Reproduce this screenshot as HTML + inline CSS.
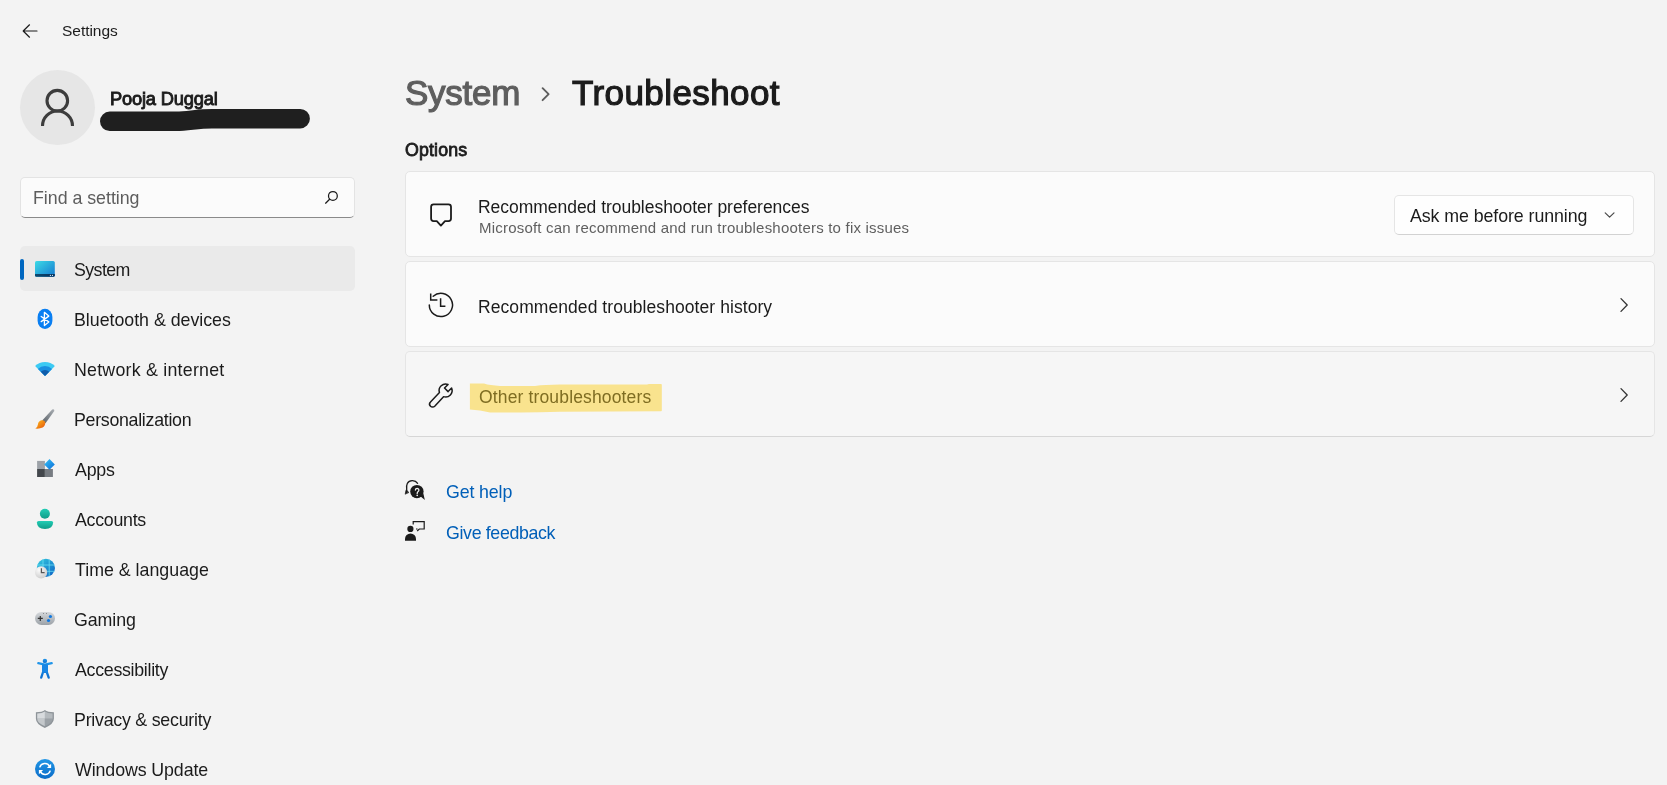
<!DOCTYPE html>
<html><head><meta charset="utf-8"><title>Settings</title>
<style>
html,body{margin:0;padding:0;}
body{width:1667px;height:785px;overflow:hidden;position:relative;background:#f3f3f3;font-family:"Liberation Sans", sans-serif;}
.t{position:absolute;white-space:nowrap;transform-origin:0 0;will-change:transform;}
.ov{position:absolute;left:0;top:0;pointer-events:none;}
.box{position:absolute;box-sizing:border-box;}
</style></head><body>
<!-- avatar -->
<div class="box" style="left:20px;top:70px;width:75px;height:75px;border-radius:50%;background:#e6e6e6"></div>
<!-- search box -->
<div class="box" style="left:20px;top:177px;width:335px;height:41px;border-radius:5px;background:#fbfbfb;border:1px solid #e3e3e3;border-bottom:1px solid #8a8a8a"></div>
<!-- nav selection -->
<div class="box" style="left:20px;top:246px;width:335px;height:45px;border-radius:5px;background:#eaeaea"></div>
<div class="box" style="left:20px;top:258.5px;width:4px;height:21px;border-radius:2px;background:#0067c0"></div>
<!-- cards -->
<div class="box" style="left:405px;top:171px;width:1250px;height:86px;border-radius:5px;background:#fbfbfb;border:1px solid #e5e5e5"></div>
<div class="box" style="left:405px;top:261px;width:1250px;height:86px;border-radius:5px;background:#fbfbfb;border:1px solid #e5e5e5"></div>
<div class="box" style="left:405px;top:351px;width:1250px;height:86px;border-radius:5px;background:#f6f6f6;border:1px solid #e5e5e5;border-bottom-color:#d6d6d6"></div>
<!-- dropdown -->
<div class="box" style="left:1394px;top:195px;width:240px;height:40px;border-radius:5px;background:#fefefe;border:1px solid #e5e5e5;border-bottom-color:#d2d2d2"></div>
<!-- highlight -->


<svg class="ov" width="1667" height="785" viewBox="0 0 1667 785">
 <g fill="none" stroke="#1b1b1b" stroke-linecap="round" stroke-linejoin="round">
  <!-- back arrow -->
  <path d="M37 31 H23.5 M29.5 24.8 L23.2 31 L29.5 37.2" stroke-width="1.2"/>
  <!-- search -->
  <circle cx="332.9" cy="195.9" r="4.4" stroke-width="1.25"/>
  <path d="M329.6 199.2 L325.6 203.2" stroke-width="1.25"/>
  <!-- breadcrumb chevron -->
  <path d="M542.6 88.2 L548.6 94.2 L542.6 100.2" stroke="#5e5e5e" stroke-width="1.9"/>
  <!-- dropdown chevron -->
  <path d="M1605.2 212.8 L1609.6 217.2 L1614 212.8" stroke="#4a4a4a" stroke-width="1.2"/>
  <!-- row chevrons -->
  <path d="M1621 298.6 L1627.2 305 L1621 311.4" stroke="#333" stroke-width="1.3"/>
  <path d="M1621 388.6 L1627.2 395 L1621 401.4" stroke="#333" stroke-width="1.3"/>
  <!-- speech bubble -->
  <path d="M433.6 204.3 H448.5 Q451 204.3 451 206.8 V218.6 Q451 221.1 448.5 221.1 H445 L440.9 225.6 L436.8 221.1 H433.6 Q431.1 221.1 431.1 218.6 V206.8 Q431.1 204.3 433.6 204.3 Z" stroke-width="1.8"/>
  <!-- history -->
  <path d="M429.3 305 A11.6 11.6 0 1 0 433.2 296.3" stroke-width="1.5"/>
  <path d="M430.7 293.4 V300 H437.4" stroke-width="1.5" stroke-linecap="butt" stroke-linejoin="miter"/>
  <path d="M440.6 298.2 V306.2 H445.4" stroke-width="1.5" stroke-linecap="butt" stroke-linejoin="miter"/>
  <!-- wrench -->
  <path d="M430.5 402.0 L439.45 392.55 A6.5 6.5 0 0 1 448.07 384.49 L444.5 388.0 L448.1 391.6 L451.6 388.0 A6.5 6.5 0 0 1 443.55 396.65 L434.7 406.2 A2.9 2.9 0 0 1 430.5 402.0 Z" stroke-width="1.5"/>
  <!-- get help arc -->
  <path d="M417.6 483.3 C415.5 480, 409.5 479.2, 407.3 483.5 C405.8 486.5, 407.3 489.5, 406.5 491.5" stroke-width="1.3"/>
  <path d="M405.3 493.8 L406.2 489.8 L408.6 492.2 Z" fill="#1b1b1b" stroke-width="0.8"/>
  <!-- feedback bubble -->
  <path d="M413.2 524.6 V521.6 H424.2 V529 H419.3 L417.2 531 M416 529 H417.5" stroke-width="1.2" stroke-linecap="butt" stroke-linejoin="miter"/>
 </g>
 <g fill="#1b1b1b">
  <!-- get help bubble -->
  <circle cx="416.9" cy="491.6" r="6.7"/>
  <path d="M420 496 L424.9 499.9 L423.3 493.5 Z"/>
  <!-- feedback person -->
  <circle cx="410.4" cy="528.9" r="3.1"/>
  <path d="M405 540.8 V539 A5.5 5.5 0 0 1 416 539 V540.8 Z"/>
 </g>

 <defs>
  <linearGradient id="gSys" x1="0" y1="0" x2="1" y2="1"><stop offset="0" stop-color="#3ddbe6"/><stop offset="1" stop-color="#1478d0"/></linearGradient>
  <linearGradient id="gSysBar" x1="0" y1="0" x2="1" y2="0"><stop offset="0" stop-color="#0d4a70"/><stop offset="1" stop-color="#06305a"/></linearGradient>
  <linearGradient id="gBrushH" x1="1" y1="0" x2="0" y2="1"><stop offset="0" stop-color="#a9aeb3"/><stop offset="1" stop-color="#5a6168"/></linearGradient>
  <linearGradient id="gBrushB" x1="0" y1="0" x2="1" y2="1"><stop offset="0" stop-color="#ffc21a"/><stop offset="1" stop-color="#e4500e"/></linearGradient>
  <linearGradient id="gDiamond" x1="0" y1="0" x2="1" y2="1"><stop offset="0" stop-color="#35c3f7"/><stop offset="1" stop-color="#0a6ad6"/></linearGradient>
  <linearGradient id="gTeal" x1="0" y1="0" x2="0" y2="1"><stop offset="0" stop-color="#22cdb5"/><stop offset="1" stop-color="#0e9c88"/></linearGradient>
  <linearGradient id="gGlobe" x1="0" y1="0" x2="1" y2="1"><stop offset="0" stop-color="#35cde0"/><stop offset="1" stop-color="#0c5fc4"/></linearGradient>
  <radialGradient id="gClock" cx="0.35" cy="0.3" r="0.8"><stop offset="0" stop-color="#fbfbfb"/><stop offset="1" stop-color="#c9c9c9"/></radialGradient>
  <linearGradient id="gPad" x1="0" y1="0" x2="0" y2="1"><stop offset="0" stop-color="#d6d9dc"/><stop offset="1" stop-color="#9ca2a8"/></linearGradient>
  <linearGradient id="gAcc" x1="0" y1="0" x2="0" y2="1"><stop offset="0" stop-color="#2196ea"/><stop offset="1" stop-color="#0d6fd0"/></linearGradient>
  <linearGradient id="gUpd" x1="0" y1="0" x2="0" y2="1"><stop offset="0" stop-color="#2196e6"/><stop offset="1" stop-color="#0b6cc8"/></linearGradient>
 </defs>
 <!-- highlight -->
 <path d="M469.9 383.4 L484 383.6 Q490 385.6 500 386 L535 386 Q545 384.8 560 384.6 L647 384.6 L649 384 L661 384 Q661.8 384 661.8 384.8 L661.8 410.5 Q661.8 411.3 661 411.3 L560 411.8 Q540 412.5 520 412.5 L490 412.5 Q480 410 469.9 409.5 Z" fill="#f9e38e"/>
 <!-- avatar person -->
 <g fill="none" stroke="#3d3d3d" stroke-width="3.1">
  <circle cx="57.3" cy="100.7" r="10.3"/>
  <path d="M42.5 126 A15 15 0 0 1 72.5 126"/>
 </g>
 <!-- redaction -->
 <path d="M109.7 121.3 L176 121.3 C189 121.3, 196 118.7, 212 118.7 L300.2 118.7" fill="none" stroke="#1f1f1f" stroke-width="19.4" stroke-linecap="round"/>
 <!-- system icon -->
 <rect x="35" y="260.9" width="19.8" height="15.9" rx="1.6" fill="url(#gSys)"/>
 <path d="M35 273.9 H54.8 V275.2 Q54.8 276.8 53.2 276.8 H36.6 Q35 276.8 35 275.2 Z" fill="url(#gSysBar)"/>
 <circle cx="50.4" cy="275.4" r="0.6" fill="#cfe6f5"/><circle cx="52.5" cy="275.4" r="0.6" fill="#cfe6f5"/>
 <!-- bluetooth -->
 <rect x="37.6" y="308.8" width="14.8" height="20.1" rx="7.4" ry="8.2" fill="#0a7ff2"/>
 <path d="M41.2 316.5 L48.8 321.9 L44.4 325.5 V312.3 L48.8 316.1 L41.2 321.6" fill="none" stroke="#fff" stroke-width="1.3" stroke-linejoin="round" stroke-linecap="round"/>
 <!-- wifi -->
 <path d="M45 376 L35.1 366.1 A14 14 0 0 1 54.9 366.1 Z" fill="#3ccaf3"/>
 <path d="M45 376 L37.9 368.9 A10 10 0 0 1 52.1 368.9 Z" fill="#1a8fe0"/>
 <path d="M45 376 L40.8 371.8 A6 6 0 0 1 49.2 371.8 Z" fill="#0f5caa"/>
 <!-- brush -->
 <path d="M52.2 409.6 Q54.5 408.6 54.3 411 L45.5 423.2 L42.2 420.6 Z" fill="url(#gBrushH)"/>
 <path d="M41.5 420.3 Q44 419.8 45.2 421.8 Q45.8 425.6 42.6 427.6 Q39.2 429.2 35.3 428.6 Q37.6 427.4 37.9 424.4 Q38.4 421 41.5 420.3 Z" fill="url(#gBrushB)"/>
 <!-- apps -->
 <rect x="37.1" y="460.9" width="7.8" height="8.1" fill="#9da2a8"/>
 <rect x="37.1" y="469" width="7.8" height="8" fill="#43474c"/>
 <rect x="44.9" y="469" width="8" height="8" fill="#777c82"/>
 <path d="M49.5 459.1 L54.8 464.4 L49.5 469.7 L44.2 464.4 Z" fill="url(#gDiamond)"/>
 <!-- accounts -->
 <circle cx="44.9" cy="513.8" r="5" fill="url(#gTeal)"/>
 <path d="M36.9 522.6 Q36.9 520.9 38.6 520.9 H51.4 Q53.1 520.9 53.1 522.6 Q53.1 528.9 45 528.9 Q36.9 528.9 36.9 522.6 Z" fill="url(#gTeal)"/>
 <!-- time & language -->
 <circle cx="45.9" cy="567.9" r="9.1" fill="url(#gGlobe)"/>
 <g stroke="#6ee3f5" stroke-width="0.8" fill="none" opacity="0.95">
  <path d="M37 565 H54.8 M37.5 571.3 H54.6"/><path d="M43 559.2 V576.6 M49.2 559.4 V576.4"/>
 </g>
 <circle cx="41.1" cy="572.4" r="6.1" fill="url(#gClock)"/>
 <path d="M41.4 568.3 V572.6 H44.6" fill="none" stroke="#555" stroke-width="1.3"/>
 <!-- gaming -->
 <rect x="35" y="611.9" width="20" height="13" rx="6.5" fill="url(#gPad)"/>
 <path d="M37.8 618.4 H42.8 M40.3 615.9 V620.9" stroke="#333" stroke-width="1.2"/>
 <circle cx="50.4" cy="616.5" r="1.6" fill="#0f78e0"/><circle cx="48.5" cy="620.5" r="1.6" fill="#0f78e0"/>
 <circle cx="43.4" cy="613.4" r="0.45" fill="#333"/><circle cx="46.4" cy="613.4" r="0.45" fill="#333"/>
 <!-- accessibility -->
 <circle cx="44.9" cy="660.9" r="2.2" fill="url(#gAcc)"/>
 <path d="M38.3 663.2 L44.9 664.6 L51.7 663.2 M44.9 664.6 V671.8 M43.4 671 L41.2 677.6 M46.4 671 L48.7 677.6" fill="none" stroke="url(#gAcc)" stroke-width="2.3" stroke-linecap="round" stroke-linejoin="round"/>
 <rect x="42" y="664.2" width="6" height="8.4" rx="1" fill="#1a86e4"/>
 <!-- shield -->
 <path d="M44.9 710 Q47.5 712.2 53.9 712.3 V718.8 Q53.9 724.2 44.8 727.9 Q35.9 724.2 35.9 718.8 V712.3 Q42.3 712.2 44.9 710 Z" fill="#8e9499"/>
 <path d="M44.9 711.6 Q47.4 713.5 52.6 713.6 V718.8 H44.9 Z" fill="#b5babe"/>
 <path d="M44.9 711.6 Q42.4 713.5 37.2 713.6 V718.8 H44.9 Z" fill="#d8dbde"/>
 <path d="M37.2 718.8 H44.9 V726.3 Q37.2 723 37.2 718.8 Z" fill="#c4c8cb"/>
 <path d="M52.6 718.8 H44.9 V726.3 Q52.6 723 52.6 718.8 Z" fill="#9ba1a6"/>
 <!-- update -->
 <circle cx="45" cy="769" r="10" fill="url(#gUpd)"/>
 <g fill="none" stroke="#fff" stroke-width="1.5">
  <path d="M39.7 767.4 A5.4 5.4 0 0 1 49.6 766.3"/>
  <path d="M50.3 770.6 A5.4 5.4 0 0 1 40.4 771.7"/>
 </g>
 <path d="M51.1 763.8 V768.1 H46.9 Z" fill="#fff"/>
 <path d="M38.9 774.2 V769.9 H43.1 Z" fill="#fff"/>
 <path d="M415.4 490 Q415.5 488.4 417.2 488.4 Q418.9 488.5 418.9 490 Q418.9 491.1 417.9 491.7 Q417.2 492.2 417.2 493.4" fill="none" stroke="#f3f3f3" stroke-width="1.3" stroke-linecap="round"/>
 <circle cx="417.2" cy="495.4" r="0.8" fill="#f3f3f3"/>
</svg>

<div class="t" id="t0" style="left:62.25px;top:22.93px;font-size:15.5px;line-height:15.5px;font-weight:400;color:#1b1b1b;letter-spacing:-0.038px">Settings</div>
<div class="t" id="t1" style="left:109.63px;top:89.94px;font-size:18.3px;line-height:18.3px;font-weight:400;color:#1b1b1b;letter-spacing:-0.183px;-webkit-text-stroke:0.9px #1b1b1b">Pooja Duggal</div>
<div class="t" id="t2" style="left:33.23px;top:189.87px;font-size:17.8px;line-height:17.8px;font-weight:400;color:#5d5d5d;letter-spacing:-0.020px">Find a setting</div>
<div class="t" id="t3" style="left:74.25px;top:262.47px;font-size:17.8px;line-height:17.8px;font-weight:400;color:#1b1b1b;letter-spacing:-0.582px">System</div>
<div class="t" id="t4" style="left:74.38px;top:312.47px;font-size:17.8px;line-height:17.8px;font-weight:400;color:#1b1b1b;letter-spacing:-0.018px">Bluetooth &amp; devices</div>
<div class="t" id="t5" style="left:74.38px;top:362.47px;font-size:17.8px;line-height:17.8px;font-weight:400;color:#1b1b1b;letter-spacing:0.234px">Network &amp; internet</div>
<div class="t" id="t6" style="left:74.38px;top:412.47px;font-size:17.8px;line-height:17.8px;font-weight:400;color:#1b1b1b;letter-spacing:-0.289px">Personalization</div>
<div class="t" id="t7" style="left:75.12px;top:462.47px;font-size:17.8px;line-height:17.8px;font-weight:400;color:#1b1b1b;letter-spacing:-0.208px">Apps</div>
<div class="t" id="t8" style="left:75.12px;top:512.47px;font-size:17.8px;line-height:17.8px;font-weight:400;color:#1b1b1b;letter-spacing:-0.270px">Accounts</div>
<div class="t" id="t9" style="left:74.94px;top:562.47px;font-size:17.8px;line-height:17.8px;font-weight:400;color:#1b1b1b;letter-spacing:0.003px">Time &amp; language</div>
<div class="t" id="t10" style="left:74.35px;top:612.47px;font-size:17.8px;line-height:17.8px;font-weight:400;color:#1b1b1b;letter-spacing:-0.080px">Gaming</div>
<div class="t" id="t11" style="left:75.12px;top:662.47px;font-size:17.8px;line-height:17.8px;font-weight:400;color:#1b1b1b;letter-spacing:-0.285px">Accessibility</div>
<div class="t" id="t12" style="left:74.38px;top:712.47px;font-size:17.8px;line-height:17.8px;font-weight:400;color:#1b1b1b;letter-spacing:-0.233px">Privacy &amp; security</div>
<div class="t" id="t13" style="left:75.17px;top:762.47px;font-size:17.8px;line-height:17.8px;font-weight:400;color:#1b1b1b;letter-spacing:-0.093px">Windows Update</div>
<div class="t" id="t14" style="left:404.57px;top:74.75px;font-size:35.0px;line-height:35.0px;font-weight:400;color:#5e5e5e;letter-spacing:-0.247px;-webkit-text-stroke:1.2px #5e5e5e">System</div>
<div class="t" id="t15" style="left:572.44px;top:74.75px;font-size:35.0px;line-height:35.0px;font-weight:400;color:#1b1b1b;letter-spacing:0.414px;-webkit-text-stroke:1.2px #1b1b1b">Troubleshoot</div>
<div class="t" id="t16" style="left:405.24px;top:141.77px;font-size:17.8px;line-height:17.8px;font-weight:400;color:#1b1b1b;letter-spacing:0.137px;-webkit-text-stroke:0.8px #1b1b1b">Options</div>
<div class="t" id="t17" style="left:478.40px;top:198.72px;font-size:17.5px;line-height:17.5px;font-weight:400;color:#1b1b1b;letter-spacing:-0.033px">Recommended troubleshooter preferences</div>
<div class="t" id="t18" style="left:478.67px;top:220.05px;font-size:15.0px;line-height:15.0px;font-weight:400;color:#5f5f5f;letter-spacing:0.206px">Microsoft can recommend and run troubleshooters to fix issues</div>
<div class="t" id="t19" style="left:1409.53px;top:207.67px;font-size:17.8px;line-height:17.8px;font-weight:400;color:#1b1b1b;letter-spacing:-0.075px">Ask me before running</div>
<div class="t" id="t20" style="left:478.42px;top:299.23px;font-size:17.5px;line-height:17.5px;font-weight:400;color:#1b1b1b;letter-spacing:0.069px">Recommended troubleshooter history</div>
<div class="t" id="t21" style="left:478.71px;top:388.82px;font-size:17.5px;line-height:17.5px;font-weight:400;color:#7f6d22;letter-spacing:0.147px">Other troubleshooters</div>
<div class="t" id="t22" style="left:445.64px;top:483.67px;font-size:17.8px;line-height:17.8px;font-weight:400;color:#005fb8;letter-spacing:-0.127px">Get help</div>
<div class="t" id="t23" style="left:445.64px;top:524.87px;font-size:17.8px;line-height:17.8px;font-weight:400;color:#005fb8;letter-spacing:-0.348px">Give feedback</div>
</body></html>
